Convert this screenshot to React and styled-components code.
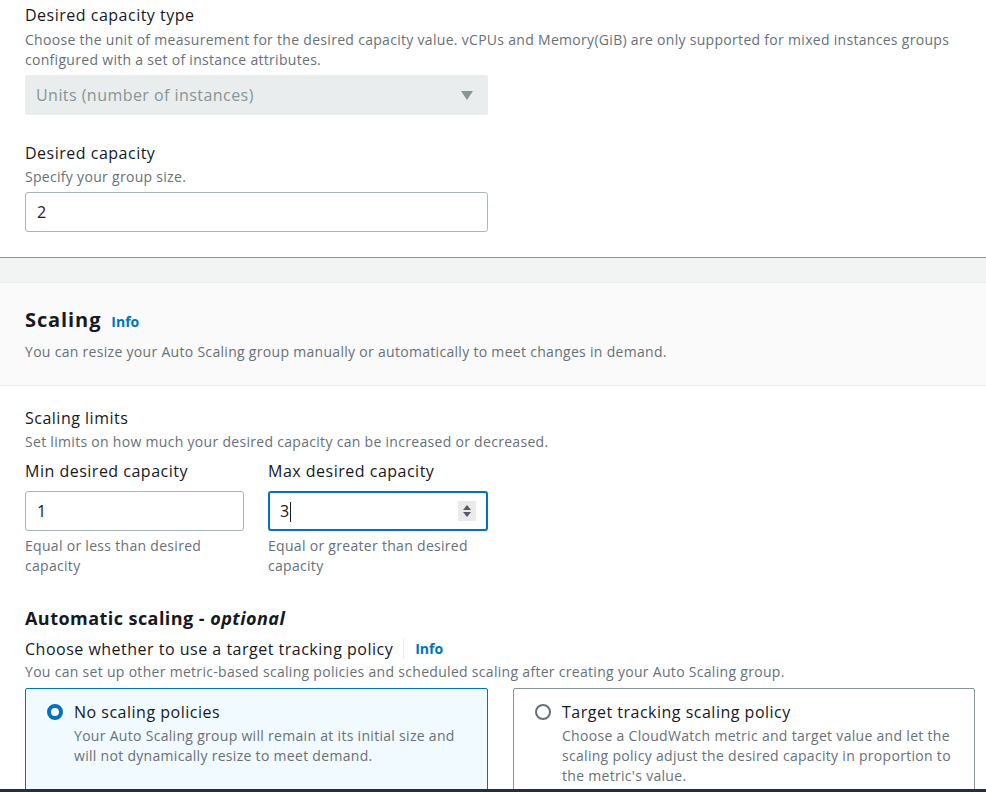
import React from 'react'
import styled, {createGlobalStyle} from 'styled-components'

const GlobalStyle = createGlobalStyle`
  html, body {
    margin: 0;
    padding: 0;
    background: #ffffff;
    font-family: 'Open Sans', 'Noto Sans', Arial, sans-serif;
    color: #16191f;
  }
  * {
    box-sizing: border-box;
  }
`

const Page = styled.div`
  width: 986px;
  min-height: 792px;
  overflow: hidden;
  background: #fff;
`

const TopSection = styled.div`
  padding: 4px 11px 25px 25px;
  display: flex;
  flex-direction: column;
  gap: 27px;
  border-bottom: 1px solid #879596;
  box-shadow: 0 1px 0 #d5dbdb;
`

const Field = styled.div`
  display: flex;
  flex-direction: column;
`

const Label = styled.div`
  font-size: 16px;
  line-height: 22px;
  letter-spacing: 0.5px;
  color: #16191f;
`

const Description = styled.div`
  font-size: 14px;
  line-height: 20px;
  letter-spacing: 0.3px;
  color: #687078;
  margin-top: ${p => p.$top || 3}px;
`

const Select = styled.div`
  margin-top: 5px;
  width: 463px;
  height: 40px;
  background: #eaeded;
  border-radius: 2px;
  display: flex;
  align-items: center;
  justify-content: space-between;
  padding: 0 15px 0 11px;
  font-size: 16px;
  letter-spacing: 0.45px;
  color: #879596;
`

const Input = styled.div`
  margin-top: ${p => p.$top || 5}px;
  width: ${p => p.$width || 463}px;
  height: 40px;
  border: ${p => p.$focus ? '2px solid #0073bb' : '1px solid #aab7b8'};
  border-radius: 3px;
  display: flex;
  align-items: center;
  justify-content: space-between;
  padding: ${p => p.$focus ? '0 10px 0 10px' : '0 11px 0 11px'};
  font-size: 16px;
  color: #16191f;
  background: #fff;
`

const Caret = styled.span`
  display: inline-block;
  width: 1px;
  height: 20px;
  background: #16191f;
  vertical-align: middle;
  margin-left: 1px;
`

const Spinner = styled.div`
  width: 18px;
  height: 20px;
  background: #eaeaea;
  display: flex;
  align-items: center;
  justify-content: center;
`

const Gap = styled.div`
  height: 24px;
  background: #f2f3f3;
`

const ContainerHeader = styled.div`
  background: #fafafa;
  padding: 23px 11px 23px 25px;
  border-top: 1px solid #eaeded;
  border-bottom: 1px solid #eaeded;
`

const Heading = styled.h2`
  margin: 0;
  font-size: 20px;
  line-height: 28px;
  font-weight: 700;
  letter-spacing: 0.9px;
  display: flex;
  align-items: baseline;
  gap: 10px;
`

const InfoLink = styled.span`
  font-size: 14px;
  font-weight: 700;
  letter-spacing: 0;
  color: #0073bb;
`

const Body = styled.div`
  padding: 21px 11px 0 25px;
`

const LimitsRow = styled.div`
  display: flex;
  gap: 24px;
  margin-top: 8px;
`

const Constraint = styled.div`
  width: ${p => p.$width}px;
  font-size: 14px;
  line-height: 20px;
  letter-spacing: 0.3px;
  color: #687078;
  margin-top: 5px;
`

const SubHeading = styled.h3`
  margin: 30px 0 0;
  font-size: 18px;
  line-height: 24px;
  font-weight: 700;
  letter-spacing: 0.45px;

  em {
    font-style: italic;
    font-weight: 700;
  }
`

const LabelRow = styled.div`
  display: flex;
  align-items: center;
  margin-top: 8px;
  font-size: 16px;
  line-height: 22px;
  letter-spacing: 0.5px;
`

const Divider = styled.span`
  width: 1px;
  height: 20px;
  background: #eaeded;
  margin: 0 11px 0 10px;
`

const Cards = styled.div`
  display: grid;
  grid-template-columns: 463px 462px;
  gap: 25px;
  margin-top: 6px;
`

const Card = styled.div`
  border: 1px solid ${p => p.$selected ? '#0073bb' : '#879596'};
  background: ${p => p.$selected ? '#f1faff' : '#fff'};
  border-radius: 2px;
  padding: 12px 18px 30px 21px;
  display: flex;
  gap: 11px;
  height: 110px;
`

const Radio = styled.span`
  flex: none;
  width: 16px;
  height: 16px;
  margin-top: 3px;
  border-radius: 50%;
  border: ${p => p.$checked ? '4px solid #0073bb' : '2px solid #687078'};
  background: #fff;
`

const CardText = styled.div`
  display: flex;
  flex-direction: column;
`

const CardTitle = styled.div`
  font-size: 16px;
  line-height: 22px;
  letter-spacing: 0.5px;
`

const CardDesc = styled.div`
  font-size: 14px;
  line-height: 20px;
  letter-spacing: 0.3px;
  color: #687078;
  margin-top: 3px;
`

const Footer = styled.div`
  position: fixed;
  left: 0;
  right: 0;
  bottom: 0;
  height: 3px;
  background: #232f3e;
`

const Arrow = () => (
  <svg width='12' height='10' viewBox='0 0 12 10'>
    <path d='M0 1 H12 L6 10 Z' fill='#879596' />
  </svg>
)

const SpinIcon = () => (
  <svg width='10' height='14' viewBox='0 0 10 14'>
    <path d='M1 6 L5 1 L9 6 Z' fill='#545b64' />
    <path d='M1 8 L5 13 L9 8 Z' fill='#545b64' />
  </svg>
)

export default function App () {
  return (
    <Page>
      <GlobalStyle />
      <TopSection>
        <Field>
          <Label>Desired capacity type</Label>
          <Description $top={4}>
            Choose the unit of measurement for the desired capacity value. vCPUs and Memory(GiB) are only supported for mixed instances groups configured with a set of instance attributes.
          </Description>
          <Select>
            <span>Units (number of instances)</span>
            <Arrow />
          </Select>
        </Field>
        <Field>
          <Label>Desired capacity</Label>
          <Description>Specify your group size.</Description>
          <Input>2</Input>
        </Field>
      </TopSection>
      <Gap />
      <ContainerHeader>
        <Heading>Scaling <InfoLink>Info</InfoLink></Heading>
        <Description $top={6}>
          You can resize your Auto Scaling group manually or automatically to meet changes in demand.
        </Description>
      </ContainerHeader>
      <Body>
        <Label>Scaling limits</Label>
        <Description $top={3}>Set limits on how much your desired capacity can be increased or decreased.</Description>
        <LimitsRow>
          <Field>
            <Label>Min desired capacity</Label>
            <Input $width={219} $top={9}>1</Input>
            <Constraint $width={219}>Equal or less than desired capacity</Constraint>
          </Field>
          <Field>
            <Label>Max desired capacity</Label>
            <Input $width={220} $top={9} $focus>
              <span>3<Caret /></span>
              <Spinner><SpinIcon /></Spinner>
            </Input>
            <Constraint $width={220}>Equal or greater than desired capacity</Constraint>
          </Field>
        </LimitsRow>
        <SubHeading>Automatic scaling - <em>optional</em></SubHeading>
        <LabelRow>
          Choose whether to use a target tracking policy
          <Divider />
          <InfoLink>Info</InfoLink>
        </LabelRow>
        <Description $top={2}>
          You can set up other metric-based scaling policies and scheduled scaling after creating your Auto Scaling group.
        </Description>
        <Cards>
          <Card $selected>
            <Radio $checked />
            <CardText>
              <CardTitle>No scaling policies</CardTitle>
              <CardDesc>Your Auto Scaling group will remain at its initial size and will not dynamically resize to meet demand.</CardDesc>
            </CardText>
          </Card>
          <Card>
            <Radio />
            <CardText>
              <CardTitle>Target tracking scaling policy</CardTitle>
              <CardDesc>Choose a CloudWatch metric and target value and let the scaling policy adjust the desired capacity in proportion to the metric's value.</CardDesc>
            </CardText>
          </Card>
        </Cards>
      </Body>
      <Footer />
    </Page>
  )
}
